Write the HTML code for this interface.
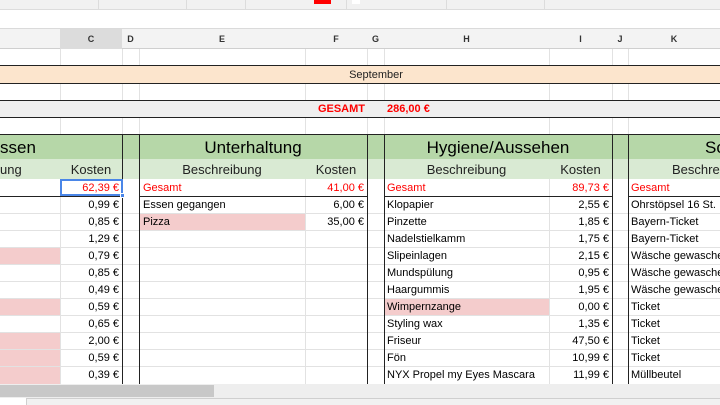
<!DOCTYPE html>
<html><head><meta charset="utf-8"><style>
*{margin:0;padding:0;box-sizing:border-box}
body{width:720px;height:405px;overflow:hidden;background:#fff;position:relative;font-family:"Liberation Sans",Arial,sans-serif;font-size:11px;color:#000}
div{position:absolute}
.t{white-space:nowrap;line-height:19px;height:17px}
.r{text-align:right}
.c{text-align:center}
.red{color:#f00}
.pk{background:#f4cccc}
.vl{width:1px;background:#e2e2e2}
.hl{height:1px;background:#e2e2e2}
.dk{background:#222}
.hd{font-size:9px;font-weight:bold;color:#333;text-align:center;line-height:20px;top:29px;height:20px}
</style></head><body>
<div style="left:0;top:0;width:720px;height:10px;background:#f1f1f1;border-bottom:1px solid #dcdcdc"></div>
<div style="left:98px;top:0;width:1px;height:10px;background:#dcdcdc"></div>
<div style="left:186px;top:0;width:1px;height:10px;background:#dcdcdc"></div>
<div style="left:245px;top:0;width:1px;height:10px;background:#dcdcdc"></div>
<div style="left:346px;top:0;width:1px;height:10px;background:#dcdcdc"></div>
<div style="left:446px;top:0;width:1px;height:10px;background:#dcdcdc"></div>
<div style="left:544px;top:0;width:1px;height:10px;background:#dcdcdc"></div>
<div style="left:314px;top:0;width:17px;height:4px;background:#f00"></div>
<div style="left:352px;top:0;width:8px;height:4px;background:#fff"></div>
<div style="left:0;top:28px;width:720px;height:1px;background:#dadada"></div>
<div style="left:0;top:29px;width:720px;height:20px;background:#f3f3f3;border-bottom:1px solid #cfcfcf"></div>
<div style="left:60px;top:29px;width:62px;height:20px;background:#dcdcdc"></div>
<div class="hd" style="left:60px;width:62px">C</div>
<div class="hd" style="left:122px;width:17px">D</div>
<div class="hd" style="left:139px;width:166px">E</div>
<div class="hd" style="left:305px;width:62px">F</div>
<div class="hd" style="left:367px;width:17px">G</div>
<div class="hd" style="left:384px;width:165px">H</div>
<div class="hd" style="left:549px;width:63px">I</div>
<div class="hd" style="left:612px;width:16px">J</div>
<div class="hd" style="left:628px;width:92px">K</div>
<div style="left:0;top:66px;width:720px;height:17px;background:#fce5cd"></div>
<div style="left:0;top:100px;width:720px;height:17px;background:#efefef"></div>
<div style="left:0;top:134px;width:720px;height:25px;background:#b6d7a8"></div>
<div style="left:0;top:159px;width:720px;height:20px;background:#d9ead3"></div>
<div style="left:122px;top:179px;width:17px;height:205px;background:#fff"></div>
<div class="pk" style="left:0;top:247px;width:60px;height:17px"></div>
<div class="pk" style="left:0;top:298px;width:60px;height:17px"></div>
<div class="pk" style="left:0;top:332px;width:60px;height:52px"></div>
<div class="pk" style="left:139px;top:213px;width:166px;height:17px"></div>
<div class="pk" style="left:384px;top:298px;width:165px;height:17px"></div>
<!-- grid vertical (upper) -->
<div class="vl" style="left:60px;top:49px;height:16px"></div>
<div class="vl" style="left:122px;top:49px;height:16px"></div>
<div class="vl" style="left:139px;top:49px;height:16px"></div>
<div class="vl" style="left:305px;top:49px;height:16px"></div>
<div class="vl" style="left:367px;top:49px;height:16px"></div>
<div class="vl" style="left:384px;top:49px;height:16px"></div>
<div class="vl" style="left:549px;top:49px;height:16px"></div>
<div class="vl" style="left:612px;top:49px;height:16px"></div>
<div class="vl" style="left:628px;top:49px;height:16px"></div>
<div class="vl" style="left:60px;top:84px;height:16px"></div>
<div class="vl" style="left:122px;top:84px;height:16px"></div>
<div class="vl" style="left:139px;top:84px;height:16px"></div>
<div class="vl" style="left:305px;top:84px;height:16px"></div>
<div class="vl" style="left:367px;top:84px;height:16px"></div>
<div class="vl" style="left:384px;top:84px;height:16px"></div>
<div class="vl" style="left:549px;top:84px;height:16px"></div>
<div class="vl" style="left:612px;top:84px;height:16px"></div>
<div class="vl" style="left:628px;top:84px;height:16px"></div>
<div class="vl" style="left:60px;top:118px;height:16px"></div>
<div class="vl" style="left:122px;top:118px;height:16px"></div>
<div class="vl" style="left:139px;top:118px;height:16px"></div>
<div class="vl" style="left:305px;top:118px;height:16px"></div>
<div class="vl" style="left:367px;top:118px;height:16px"></div>
<div class="vl" style="left:384px;top:118px;height:16px"></div>
<div class="vl" style="left:549px;top:118px;height:16px"></div>
<div class="vl" style="left:612px;top:118px;height:16px"></div>
<div class="vl" style="left:628px;top:118px;height:16px"></div>
<!-- grid vertical (data) -->
<div class="vl" style="left:60px;top:179px;height:205px"></div>
<div class="vl" style="left:305px;top:179px;height:205px"></div>
<div class="vl" style="left:549px;top:179px;height:205px"></div>
<div class="hl" style="left:0;top:213px;width:720px"></div>
<div class="hl" style="left:0;top:230px;width:720px"></div>
<div class="hl" style="left:0;top:247px;width:720px"></div>
<div class="hl" style="left:0;top:264px;width:720px"></div>
<div class="hl" style="left:0;top:281px;width:720px"></div>
<div class="hl" style="left:0;top:298px;width:720px"></div>
<div class="hl" style="left:0;top:315px;width:720px"></div>
<div class="hl" style="left:0;top:332px;width:720px"></div>
<div class="hl" style="left:0;top:349px;width:720px"></div>
<div class="hl" style="left:0;top:366px;width:720px"></div>
<div class="dk" style="left:0;top:65px;width:720px;height:1px"></div>
<div class="dk" style="left:0;top:83px;width:720px;height:1px"></div>
<div class="dk" style="left:0;top:100px;width:720px;height:1px"></div>
<div class="dk" style="left:0;top:117px;width:720px;height:1px"></div>
<div class="dk" style="left:0;top:134px;width:720px;height:1px"></div>
<div class="dk" style="left:0;top:196px;width:122px;height:1px"></div>
<div class="dk" style="left:139px;top:196px;width:228px;height:1px"></div>
<div class="dk" style="left:384px;top:196px;width:228px;height:1px"></div>
<div class="dk" style="left:628px;top:196px;width:92px;height:1px"></div>
<div class="dk" style="left:122px;top:134px;width:1px;height:250px"></div>
<div class="dk" style="left:139px;top:134px;width:1px;height:250px"></div>
<div class="dk" style="left:367px;top:134px;width:1px;height:250px"></div>
<div class="dk" style="left:384px;top:134px;width:1px;height:250px"></div>
<div class="dk" style="left:612px;top:134px;width:1px;height:250px"></div>
<div class="dk" style="left:628px;top:134px;width:1px;height:250px"></div>
<div style="left:60px;top:179px;width:63px;height:17px;border:2px solid #4a86e8"></div>
<div style="left:120px;top:193px;width:5px;height:5px;background:#4a86e8;border:1px solid #fff"></div>
<div class="t" style="left:305px;top:66px;width:142px;text-align:center;color:#222">September</div>
<div class="t red" style="left:305px;top:100px;width:60px;text-align:right;font-weight:bold">GESAMT</div>
<div class="t red" style="left:387px;top:100px;font-weight:bold">286,00 €</div>
<div class="t" style="left:0;top:138px;font-size:17px;line-height:20px;height:20px">ssen</div>
<div class="t c" style="left:139px;top:138px;width:228px;font-size:17px;line-height:20px;height:20px">Unterhaltung</div>
<div class="t c" style="left:384px;top:138px;width:228px;font-size:17px;line-height:20px;height:20px">Hygiene/Aussehen</div>
<div class="t" style="left:705px;top:138px;font-size:17px;line-height:20px;height:20px">So</div>
<div class="t" style="left:0;top:160px;font-size:13px;color:#222">ung</div>
<div class="t c" style="left:60px;top:160px;width:62px;font-size:13px;color:#222">Kosten</div>
<div class="t c" style="left:139px;top:160px;width:166px;font-size:13px;color:#222">Beschreibung</div>
<div class="t c" style="left:305px;top:160px;width:62px;font-size:13px;color:#222">Kosten</div>
<div class="t c" style="left:384px;top:160px;width:165px;font-size:13px;color:#222">Beschreibung</div>
<div class="t c" style="left:549px;top:160px;width:63px;font-size:13px;color:#222">Kosten</div>
<div class="t" style="left:672px;top:160px;font-size:13px;color:#222">Beschrei</div>
<div class="t r red" style="left:60px;top:179px;width:59px">62,39 €</div>
<div class="t red" style="left:143px;top:179px">Gesamt</div>
<div class="t r red" style="left:305px;top:179px;width:59px">41,00 €</div>
<div class="t red" style="left:387px;top:179px">Gesamt</div>
<div class="t r red" style="left:549px;top:179px;width:60px">89,73 €</div>
<div class="t red" style="left:631px;top:179px">Gesamt</div>
<div class="t r" style="left:60px;top:196px;width:59px">0,99 €</div>
<div class="t r" style="left:60px;top:213px;width:59px">0,85 €</div>
<div class="t r" style="left:60px;top:230px;width:59px">1,29 €</div>
<div class="t r" style="left:60px;top:247px;width:59px">0,79 €</div>
<div class="t r" style="left:60px;top:264px;width:59px">0,85 €</div>
<div class="t r" style="left:60px;top:281px;width:59px">0,49 €</div>
<div class="t r" style="left:60px;top:298px;width:59px">0,59 €</div>
<div class="t r" style="left:60px;top:315px;width:59px">0,65 €</div>
<div class="t r" style="left:60px;top:332px;width:59px">2,00 €</div>
<div class="t r" style="left:60px;top:349px;width:59px">0,59 €</div>
<div class="t r" style="left:60px;top:366px;width:59px">0,39 €</div>
<div class="t" style="left:143px;top:196px">Essen gegangen</div>
<div class="t r" style="left:305px;top:196px;width:59px">6,00 €</div>
<div class="t" style="left:143px;top:213px">Pizza</div>
<div class="t r" style="left:305px;top:213px;width:59px">35,00 €</div>
<div class="t" style="left:387px;top:196px">Klopapier</div><div class="t r" style="left:549px;top:196px;width:60px">2,55 €</div>
<div class="t" style="left:387px;top:213px">Pinzette</div><div class="t r" style="left:549px;top:213px;width:60px">1,85 €</div>
<div class="t" style="left:387px;top:230px">Nadelstielkamm</div><div class="t r" style="left:549px;top:230px;width:60px">1,75 €</div>
<div class="t" style="left:387px;top:247px">Slipeinlagen</div><div class="t r" style="left:549px;top:247px;width:60px">2,15 €</div>
<div class="t" style="left:387px;top:264px">Mundspülung</div><div class="t r" style="left:549px;top:264px;width:60px">0,95 €</div>
<div class="t" style="left:387px;top:281px">Haargummis</div><div class="t r" style="left:549px;top:281px;width:60px">1,95 €</div>
<div class="t" style="left:387px;top:298px">Wimpernzange</div><div class="t r" style="left:549px;top:298px;width:60px">0,00 €</div>
<div class="t" style="left:387px;top:315px">Styling wax</div><div class="t r" style="left:549px;top:315px;width:60px">1,35 €</div>
<div class="t" style="left:387px;top:332px">Friseur</div><div class="t r" style="left:549px;top:332px;width:60px">47,50 €</div>
<div class="t" style="left:387px;top:349px">Fön</div><div class="t r" style="left:549px;top:349px;width:60px">10,99 €</div>
<div class="t" style="left:387px;top:366px">NYX Propel my Eyes Mascara</div><div class="t r" style="left:549px;top:366px;width:60px">11,99 €</div>
<div class="t" style="left:631px;top:196px">Ohrstöpsel 16 St.</div>
<div class="t" style="left:631px;top:213px">Bayern-Ticket</div>
<div class="t" style="left:631px;top:230px">Bayern-Ticket</div>
<div class="t" style="left:631px;top:247px">Wäsche gewaschen</div>
<div class="t" style="left:631px;top:264px">Wäsche gewaschen</div>
<div class="t" style="left:631px;top:281px">Wäsche gewaschen</div>
<div class="t" style="left:631px;top:298px">Ticket</div>
<div class="t" style="left:631px;top:315px">Ticket</div>
<div class="t" style="left:631px;top:332px">Ticket</div>
<div class="t" style="left:631px;top:349px">Ticket</div>
<div class="t" style="left:631px;top:366px">Müllbeutel</div>
<div style="left:0;top:384px;width:720px;height:14px;background:#eeeeee"></div>
<div style="left:0;top:385px;width:214px;height:12px;background:#c8c8c8"></div>
<div style="left:0;top:398px;width:720px;height:7px;background:#fff"></div>
<div style="left:26px;top:398px;width:694px;height:7px;background:#f1f1f1;border-top:1px solid #cfcfcf;border-left:1px solid #cfcfcf"></div>
</body></html>
